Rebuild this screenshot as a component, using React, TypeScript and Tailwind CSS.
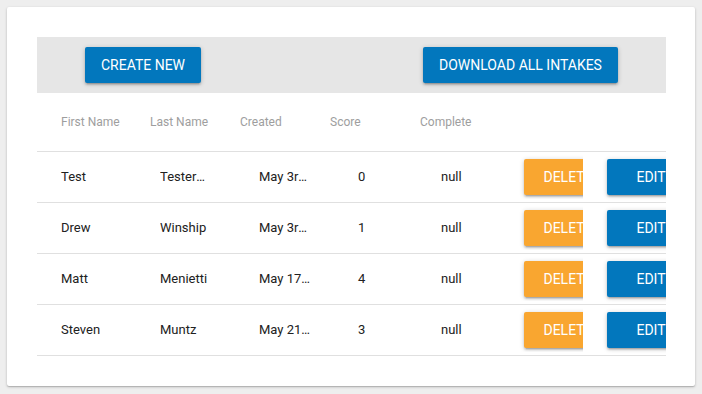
import React from 'react';

interface Intake {
    first: string;
    last: string;
    created: string;
    score: number;
    complete: string;
}

const intakes: Intake[] = [
    { first: 'Test', last: 'Testerson', created: 'May 3rd 2018', score: 0, complete: 'null' },
    { first: 'Drew', last: 'Winship', created: 'May 3rd 2018', score: 1, complete: 'null' },
    { first: 'Matt', last: 'Menietti', created: 'May 17th 2018', score: 4, complete: 'null' },
    { first: 'Steven', last: 'Muntz', created: 'May 21st 2018', score: 3, complete: 'null' },
];

const btnBase =
    'h-9 min-w-[88px] rounded-[2px] text-[14px] font-normal uppercase whitespace-nowrap text-white shadow-[0_1px_5px_0_rgba(0,0,0,0.2),0_2px_2px_0_rgba(0,0,0,0.14),0_3px_1px_-2px_rgba(0,0,0,0.12)] flex items-center justify-center shrink-0';

export default function App() {
    return (
        <div className="h-[394px] w-[702px] bg-[#eeeeee] p-[7px] font-['Roboto',sans-serif] overflow-hidden">
            <div className="w-[688px] h-[379px] bg-white rounded-[2px] shadow-[0_1px_3px_0_rgba(0,0,0,0.2),0_1px_1px_0_rgba(0,0,0,0.14)] pt-[30px] pl-[30px]">
                <div className="w-[629px] overflow-hidden">
                    {/* Toolbar */}
                    <div className="h-[56px] bg-[#e6e6e6] flex items-center pl-[48px] gap-[222px]">
                        <button className={`${btnBase} w-[116px] bg-[#0277bd]`}>Create New</button>
                        <button className={`${btnBase} w-[195px] bg-[#0277bd]`}>Download All Intakes</button>
                    </div>

                    {/* Header */}
                    <div className="h-[59px] border-b border-[#e0e0e0] flex items-center text-[12px] text-[#9e9e9e]">
                        <div className="w-[89px] pl-6 shrink-0">First Name</div>
                        <div className="w-[90px] pl-6 shrink-0">Last Name</div>
                        <div className="w-[90px] pl-6 shrink-0">Created</div>
                        <div className="w-[90px] pl-6 shrink-0">Score</div>
                        <div className="pl-6 shrink-0">Complete</div>
                    </div>

                    {/* Rows */}
                    {intakes.map((row) => (
                        <div
                            key={row.first}
                            className="h-[51px] border-b border-[#e0e0e0] flex items-center text-[13px] text-[#212121]"
                        >
                            <div className="w-[99px] pl-6 shrink-0">{row.first}</div>
                            <div className="w-[99px] pl-6 shrink-0">
                                <div className="w-[49px] truncate">{row.last}</div>
                            </div>
                            <div className="w-[99px] pl-6 shrink-0">
                                <div className="w-[53px] truncate">{row.created}</div>
                            </div>
                            <div className="w-[83px] pl-6 shrink-0">{row.score}</div>
                            <div className="w-[83px] pl-6 shrink-0">{row.complete}</div>
                            <div className="w-[83px] pl-6 shrink-0 overflow-hidden py-1">
                                <button className={`${btnBase} px-4 bg-[#f9a630]`}>Delete</button>
                            </div>
                            <div className="w-[83px] pl-6 shrink-0 py-1">
                                <button className={`${btnBase} px-4 bg-[#0277bd]`}>Edit</button>
                            </div>
                        </div>
                    ))}
                </div>
            </div>
        </div>
    );
}
